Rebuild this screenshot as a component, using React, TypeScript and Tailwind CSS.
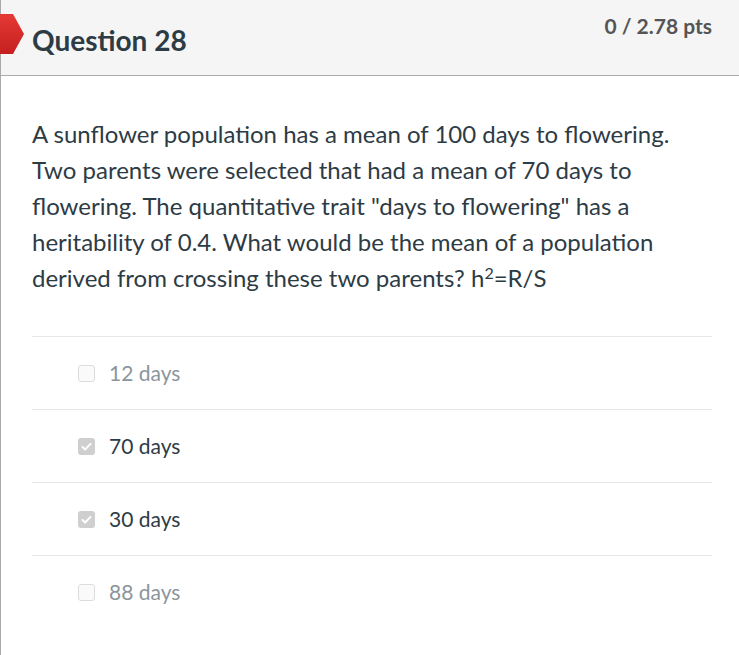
import React from 'react';

const answers = [
  { label: '12 days', checked: false },
  { label: '70 days', checked: true },
  { label: '30 days', checked: true },
  { label: '88 days', checked: false },
];

const Box: React.FC<{ checked: boolean }> = ({ checked }) =>
  checked ? (
    <span className="flex h-[17px] w-[17px] items-center justify-center rounded-[3px] bg-[#cfcfcf]">
      <svg viewBox="0 0 16 16" className="h-[13px] w-[13px]">
        <path d="M3 8.5l3.2 3.2L13 4.8" fill="none" stroke="#fff" strokeWidth="2.4" strokeLinecap="round" strokeLinejoin="round" />
      </svg>
    </span>
  ) : (
    <span className="h-[17px] w-[17px] rounded-[3px] border border-[#dcdcdc] bg-[#fafafa]" />
  );

export default function App() {
  return (
    <div className="min-h-[655px] w-[739px] border-l border-[#aaa] bg-white font-['Lato','Liberation_Sans',sans-serif] text-[#2d3b45]">
      {/* Header */}
      <div className="relative flex h-[76px] justify-between border-b border-[#aaa] bg-[#f5f5f5] pl-[31px] pr-[27px]">
        <svg viewBox="0 0 24 40" className="absolute left-[-1px] top-[14px] h-[40px] w-[24px]">
          <defs>
            <linearGradient id="flag" x1="0" y1="0" x2="0" y2="1">
              <stop offset="0" stopColor="#e53935" />
              <stop offset="1" stopColor="#c4201f" />
            </linearGradient>
          </defs>
          <path d="M0 0H13L24 20L13 40H0Z" fill="url(#flag)" />
        </svg>
        <h2 className="pt-[22px] text-[28px] font-bold leading-[36px]">Question 28</h2>
        <div className="pt-[13px] text-[21px] font-bold leading-[26px] text-[#555]">0 / 2.78 pts</div>
      </div>

      {/* Body */}
      <div className="pl-[31px] pr-[27px] pt-[40px]">
        <p className="text-[24px] leading-[36px]">
          A sunflower population has a mean of 100 days to flowering. Two parents were selected that had a mean of 70 days to flowering. The quantitative trait "days to flowering" has a heritability of 0.4. What would be the mean of a population derived from crossing these two parents? h<sup className="text-[16px]">2</sup>=R/S
        </p>
        <div className="mt-[40px]">
          {answers.map((a) => (
            <div key={a.label} className="flex h-[73px] items-center gap-[14px] border-t border-[#e6e6e6] pl-[46px]">
              <Box checked={a.checked} />
              <span className={`text-[21px] ${a.checked ? 'text-[#2d3b45]' : 'text-[#8b959c]'}`}>{a.label}</span>
            </div>
          ))}
        </div>
      </div>
    </div>
  );
}
